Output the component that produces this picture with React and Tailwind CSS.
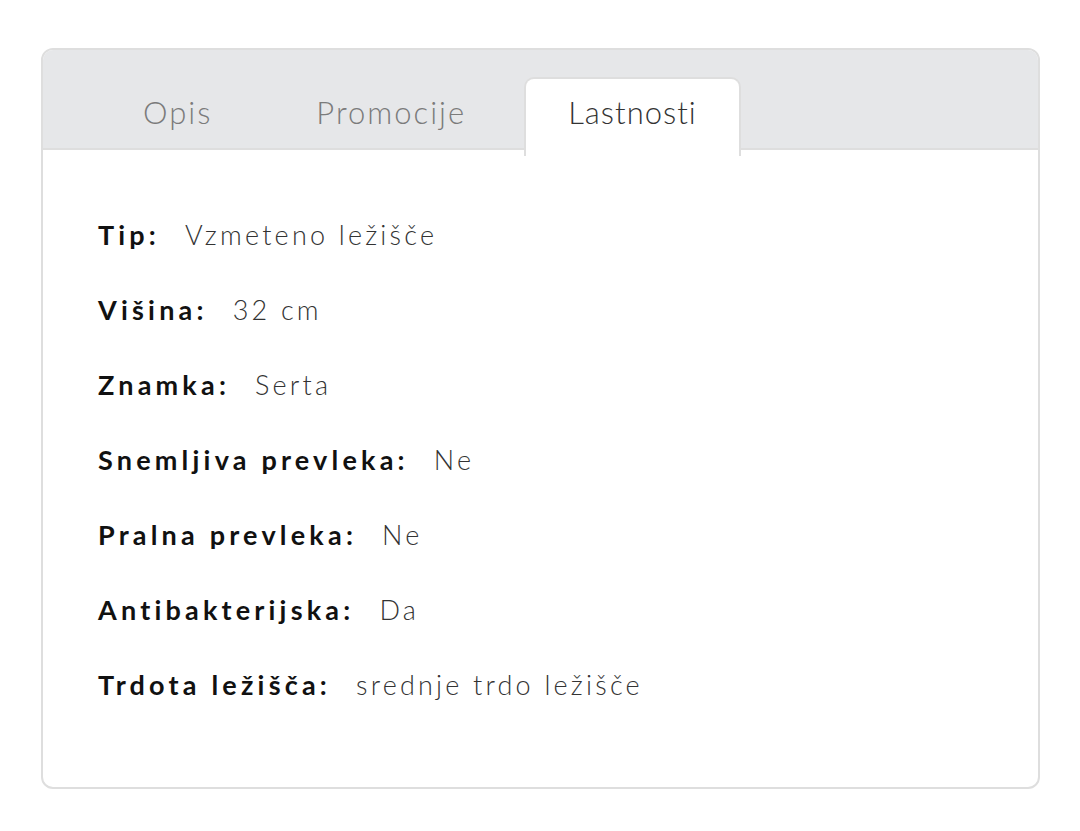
export default function App() {
  const rows = [
    ["Tip:", "Vzmeteno ležišče"],
    ["Višina:", "32 cm"],
    ["Znamka:", "Serta"],
    ["Snemljiva prevleka:", "Ne"],
    ["Pralna prevleka:", "Ne"],
    ["Antibakterijska:", "Da"],
    ["Trdota ležišča:", "srednje trdo ležišče"],
  ];

  return (
    <main
      className="min-h-screen bg-white pl-[41px] pt-[48px]"
      style={{ fontFamily: "Lato, 'Noto Sans', sans-serif" }}
    >
      <div className="w-[999px] h-[741px] rounded-[12px] border-2 border-[#dedede] overflow-hidden">
        <div className="bg-[#e6e7e9] h-[100px] border-b-2 border-[#dedede] flex items-end pl-[57px] gap-[18px]">
          <div className="px-[43px] h-[70px] pb-[2px] flex items-center text-[31px] font-light tracking-[2px] text-[#7b7b7b]">Opis</div>
          <div className="px-[43px] h-[70px] pb-[2px] flex items-center text-[31px] font-light tracking-[2px] text-[#7b7b7b]">Promocije</div>
          <div className="relative -ml-[3px] -mb-[8px] px-[42px] h-[79px] pb-[11px] flex items-center bg-white rounded-t-[10px] border-2 border-b-0 border-[#dedede] text-[31px] font-light tracking-[1px] text-[#333]">
            Lastnosti
          </div>
        </div>
        <div className="pt-[48px] pl-[55px]">
          {rows.map(([k, v]) => (
            <div key={k} className="h-[75px] flex items-center gap-[25px] text-[27px]">
              <span className="font-bold tracking-[4.2px] text-[#111]">{k}</span>
              <span className="font-light tracking-[3.2px] text-[#333]">{v}</span>
            </div>
          ))}
        </div>
      </div>
    </main>
  );
}
